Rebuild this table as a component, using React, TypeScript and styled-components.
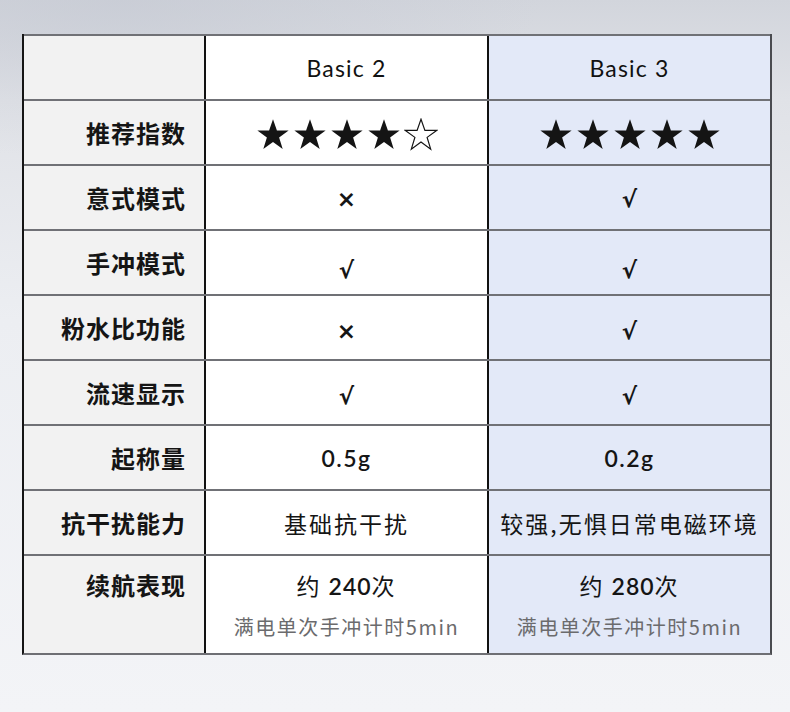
import React from 'react';
import styled, { createGlobalStyle } from 'styled-components';

const GlobalStyle = createGlobalStyle`
  html, body {
    margin: 0;
    padding: 0;
  }
  body {
    width: 790px;
    height: 712px;
    overflow: hidden;
    font-family: Lato, "Noto Sans CJK SC", sans-serif;
    color: #151515;
  }
`;

const Page = styled.div`
  width: 790px;
  height: 712px;
  box-sizing: border-box;
  padding: 34px 0 0 22px;
  background:
    radial-gradient(ellipse 420px 160px at 120px 0px, rgba(196, 200, 210, 0.6), rgba(255, 255, 255, 0)),
    linear-gradient(180deg, #d2d5dc 0%, #e0e2e7 14%, #eceef2 45%, #f3f4f7 100%);
`;

const Table = styled.div`
  width: 750px;
  box-sizing: border-box;
  border-left: 2px solid #151515;
  border-right: 2px solid #4a4b50;
  border-bottom: 2px solid #6e6f74;
`;

const Row = styled.div<{ $h: number }>`
  display: grid;
  grid-template-columns: 182px 283px 281px;
  height: ${(p) => p.$h}px;
  box-sizing: border-box;
  border-top: 2px solid #707176;
`;

const Label = styled.div<{ $top?: boolean }>`
  display: flex;
  align-items: ${(p) => (p.$top ? 'flex-start' : 'center')};
  justify-content: flex-end;
  padding: ${(p) => (p.$top ? '14px 18px 0 0' : '0 18px 0 0')};
  background: #f2f2f2;
  border-right: 2px solid #111;
  font-family: "Noto Sans CJK SC", sans-serif;
  font-weight: 700;
  font-size: 24px;
  letter-spacing: 1px;
  line-height: 30px;
`;

const Cell = styled.div<{ $blue?: boolean; $top?: boolean }>`
  display: flex;
  flex-direction: column;
  align-items: center;
  justify-content: ${(p) => (p.$top ? 'flex-start' : 'center')};
  padding-top: ${(p) => (p.$top ? '14px' : '0')};
  background: ${(p) => (p.$blue ? '#e3e9f8' : '#fff')};
  border-right: ${(p) => (p.$blue ? 'none' : '2px solid #111')};
`;

const Head = styled.span`
  font-family: Lato, sans-serif;
  font-size: 23px;
  font-weight: 400;
  letter-spacing: 1.2px;
  color: #111;
`;

const Value = styled.span<{ $latin?: boolean }>`
  font-family: ${(p) =>
    p.$latin ? 'Lato, "Noto Sans CJK SC", sans-serif' : '"Noto Sans CJK SC", sans-serif'};
  font-size: 23px;
  font-weight: ${(p) => (p.$latin ? 600 : 400)};
  letter-spacing: ${(p) => (p.$latin ? '1.5px' : '2px')};
  line-height: 30px;
`;

const Num = styled.span`
  font-family: Lato, sans-serif;
  font-weight: 600;
  letter-spacing: 1px;
`;

const Mark = styled.span<{ $shift: number }>`
  font-family: "DejaVu Sans", sans-serif;
  font-size: 23px;
  font-weight: 700;
  line-height: 30px;
  margin-top: ${(p) => p.$shift}px;
`;

const Sub = styled.span`
  margin-top: 12px;
  font-family: "Noto Sans CJK SC", sans-serif;
  font-size: 20px;
  letter-spacing: 1.5px;
  line-height: 28px;
  color: #6b6b6d;
`;

const Stars = styled.div`
  display: flex;
  gap: 3px;
  margin-top: 4px;
`;

const StarIcon: React.FC<{ filled: boolean }> = ({ filled }) => (
  <svg width="34" height="33" viewBox="0 0 100 96">
    <polygon
      points="50,3 61.5,36 96,36 68,56.5 78.5,91 50,70 21.5,91 32,56.5 4,36 38.5,36"
      fill={filled ? '#141414' : 'none'}
      stroke="#141414"
      strokeWidth={filled ? 0 : 3.5}
      strokeLinejoin="miter"
    />
  </svg>
);

const Rating: React.FC<{ value: number }> = ({ value }) => (
  <Stars>
    {[0, 1, 2, 3, 4].map((i) => (
      <StarIcon key={i} filled={i < value} />
    ))}
  </Stars>
);

type Feature = { label: string; b2: boolean; b3: boolean; shift: number };

const features: Feature[] = [
  { label: '意式模式', b2: false, b3: true, shift: 2 },
  { label: '手冲模式', b2: true, b3: true, shift: 14 },
  { label: '粉水比功能', b2: false, b3: true, shift: 7 },
  { label: '流速显示', b2: true, b3: true, shift: 6 },
];

const mark = (ok: boolean, shift: number) => <Mark $shift={shift}>{ok ? '√' : '×'}</Mark>;

export default function App() {
  return (
    <>
      <GlobalStyle />
      <Page>
        <Table>
          <Row $h={65}>
            <Label />
            <Cell>
              <Head>Basic 2</Head>
            </Cell>
            <Cell $blue>
              <Head>Basic 3</Head>
            </Cell>
          </Row>
          <Row $h={65}>
            <Label>推荐指数</Label>
            <Cell>
              <Rating value={4} />
            </Cell>
            <Cell $blue>
              <Rating value={5} />
            </Cell>
          </Row>
          {features.map((f) => (
            <Row $h={65} key={f.label}>
              <Label>{f.label}</Label>
              <Cell>{mark(f.b2, f.shift)}</Cell>
              <Cell $blue>{mark(f.b3, f.shift)}</Cell>
            </Row>
          ))}
          <Row $h={65}>
            <Label>起称量</Label>
            <Cell>
              <Value $latin>0.5g</Value>
            </Cell>
            <Cell $blue>
              <Value $latin>0.2g</Value>
            </Cell>
          </Row>
          <Row $h={65}>
            <Label>抗干扰能力</Label>
            <Cell>
              <Value>基础抗干扰</Value>
            </Cell>
            <Cell $blue>
              <Value>较强,无惧日常电磁环境</Value>
            </Cell>
          </Row>
          <Row $h={99}>
            <Label $top>续航表现</Label>
            <Cell $top>
              <Value>
                约 <Num>240</Num>次
              </Value>
              <Sub>满电单次手冲计时5min</Sub>
            </Cell>
            <Cell $blue $top>
              <Value>
                约 <Num>280</Num>次
              </Value>
              <Sub>满电单次手冲计时5min</Sub>
            </Cell>
          </Row>
        </Table>
      </Page>
    </>
  );
}
